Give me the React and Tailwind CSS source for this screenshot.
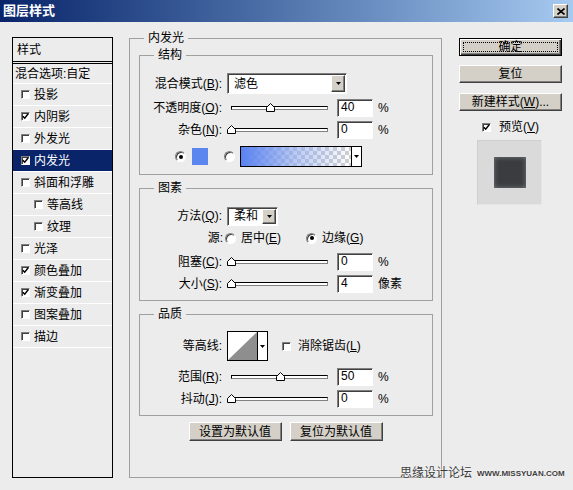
import React from 'react';

const FONT = "font-['Liberation_Sans','Noto_Sans_CJK_SC',sans-serif]";

// classic 3D borders
const raised =
  'border border-t-white border-l-white border-r-[#404040] border-b-[#404040] shadow-[inset_-1px_-1px_0_#808080]';
const sunken =
  'border border-t-[#808080] border-l-[#808080] border-r-white border-b-white shadow-[inset_1px_1px_0_#404040]';

const Caret = () => (
  <svg width="5" height="3" viewBox="0 0 5 3">
    <path d="M0 0h5L2.5 3z" fill="#000" />
  </svg>
);

const Key = ({ k }) => (
  <>
    (<span className="underline underline-offset-1">{k}</span>)
  </>
);

const CheckBox = ({ checked }) => (
  <span className={`flex h-[9px] w-[9px] shrink-0 items-center justify-center bg-white ${sunken}`}>
    {checked && (
      <svg width="7" height="7" viewBox="0 0 7 7">
        <path d="M0.8 3.2l1.9 2 3.5-4.4" stroke="#000" strokeWidth="1.5" fill="none" />
      </svg>
    )}
  </span>
);

const Radio = ({ on }) => (
  <span className="flex h-[11px] w-[11px] shrink-0 items-center justify-center rounded-full border border-t-[#808080] border-l-[#808080] border-r-white border-b-white bg-white shadow-[inset_1px_1px_0_#404040]">
    {on && <span className="h-[4px] w-[4px] rounded-full bg-black" />}
  </span>
);

const Field = ({ value }) => (
  <div className={`ml-[5px] h-[18px] w-[36px] bg-white pl-[3px] text-[12px] leading-[15px] ${sunken}`}>
    {value}
  </div>
);

const Slider = ({ pos }) => (
  <div className="relative ml-[5px] flex h-[12px] w-[105px] items-center">
    <div className="ml-[4px] h-[4px] w-[97px] border border-black border-r-[#808080] border-b-[#808080] bg-white" />
    {/* thumb */}
    <svg className="absolute top-[1px]" style={{ left: pos * 0.97 }} width="9" height="9" viewBox="0 0 9 9">
      <path d="M0.5 8.5V4.5L4.5 0.5L8.5 4.5V8.5Z" fill="#fff" stroke="#000" />
    </svg>
  </div>
);

const SliderRow = ({ label, value, pos, unit = '%', className = '' }) => (
  <div className={`flex h-[22px] items-center ${className}`}>
    <span className="w-[82px] whitespace-nowrap text-right">{label}</span>
    <Slider pos={pos} />
    <Field value={value} />
    <span className="ml-[5px]">{unit}</span>
  </div>
);

const Select = ({ value, width, height }) => (
  <div className={`ml-[5px] flex items-center justify-between bg-white pr-[1px] ${sunken} ${width} ${height}`}>
    <span className="pl-[6px]">{value}</span>
    <span className={`flex h-[calc(100%-2px)] w-[14px] items-center justify-center bg-[#d4d0c8] ${raised}`}>
      <Caret />
    </span>
  </div>
);

const Group = ({ title, className = '', children }) => (
  <fieldset className={`border border-[#a0a0a0] ${className}`}>
    <legend className="ml-[14px] px-[4px] text-[12px] leading-[14px]">{title}</legend>
    {children}
  </fieldset>
);

const Button = ({ children, className = '' }) => (
  <button className={`flex items-center justify-center bg-[#d4d0c8] text-[12px] text-black ${raised} ${className}`}>
    {children}
  </button>
);

const styles = [
  { label: '投影', checked: false },
  { label: '内阴影', checked: true },
  { label: '外发光', checked: false },
  { label: '内发光', checked: true, active: true },
  { label: '斜面和浮雕', checked: false },
  { label: '等高线', checked: false, sub: true },
  { label: '纹理', checked: false, sub: true },
  { label: '光泽', checked: false },
  { label: '颜色叠加', checked: true },
  { label: '渐变叠加', checked: true },
  { label: '图案叠加', checked: false },
  { label: '描边', checked: false },
];

export default function App() {
  return (
    <div className={`relative h-[490px] w-[573px] overflow-hidden bg-[#ececec] text-[12px] text-black ${FONT}`}>
      {/* title bar */}
      <div className="flex h-[22px] items-center justify-between bg-linear-to-r from-[#0a246a] to-[#a6caf0]">
        <span className="pl-[3px] text-[13px] font-bold text-white">图层样式</span>
        <span className={`mr-[5px] flex h-[14px] w-[15px] items-center justify-center bg-[#d4d0c8] ${raised}`}>
          <svg width="8" height="7" viewBox="0 0 8 7">
            <path d="M0.5 0.5l7 6M7.5 0.5l-7 6" stroke="#000" strokeWidth="1.6" />
          </svg>
        </span>
      </div>

      <div className="flex items-start">
        {/* style list */}
        <div className="ml-[12px] mt-[15px] flex h-[441px] w-[101px] flex-col border border-black">
          <div className="flex h-[26px] shrink-0 items-center border-b-[3px] border-double border-black pl-[4px]">样式</div>
          <div className="flex h-[19px] shrink-0 items-center pl-[2px]">混合选项:自定</div>
          {styles.map((s) => (
            <div
              key={s.label}
              className={`flex h-[22px] shrink-0 items-center gap-[4px] border-t border-white ${s.sub ? 'pl-[21px]' : 'pl-[8px]'} ${s.active ? 'bg-[#0a246a] text-white' : ''}`}
            >
              <CheckBox checked={s.checked} />
              <span>{s.label}</span>
            </div>
          ))}
          <div className="border-t border-white" />
        </div>

        {/* settings */}
        <Group title="内发光" className="ml-[16px] mt-[9px] w-[313px] pb-[36px]">
          <Group title="结构" className="ml-[9px] mt-[3px] w-[294px] pb-[7px]">
            <div className="mt-[11px] flex h-[21px] items-center">
              <span className="w-[82px] whitespace-nowrap text-right">
                混合模式<Key k="B" />:
              </span>
              <Select value="滤色" width="w-[120px]" height="h-[21px]" />
            </div>
            <SliderRow className="mt-[3px]" label={<>不透明度<Key k="O" />:</>} value="40" pos={40} />
            <SliderRow label={<>杂色<Key k="N" />:</>} value="0" pos={0} />
            <div className="mt-[5px] flex h-[21px] items-center pl-[35px]">
              <Radio on />
              <span className="ml-[6px] h-[17px] w-[16px] bg-[#5b86f0]" />
              <span className="ml-[16px]">
                <Radio />
              </span>
              <div className="ml-[5px] flex h-[21px] w-[122px] border border-black bg-white">
                <div className="h-full flex-1 bg-[image:repeating-conic-gradient(#cfcfcf_0_25%,#ffffff_0_50%)] bg-[length:8px_8px]">
                  <div className="h-full w-full bg-linear-to-r from-[#5a82f0] via-[#8ca8f0]/60 to-transparent" />
                </div>
                <span className="flex w-[10px] items-center justify-center border-l border-black bg-white">
                  <Caret />
                </span>
              </div>
            </div>
          </Group>

          <Group title="图素" className="ml-[9px] mt-[6px] w-[294px] pb-[5px]">
            <div className="mt-[11px] flex h-[20px] items-center">
              <span className="w-[82px] whitespace-nowrap text-right">
                方法<Key k="Q" />:
              </span>
              <Select value="柔和" width="w-[51px]" height="h-[19px]" />
            </div>
            <div className="mt-[1px] flex h-[22px] items-center">
              <span className="w-[83px] text-right">源:</span>
              <span className="ml-[2px]">
                <Radio />
              </span>
              <span className="ml-[5px]">
                居中<Key k="E" />
              </span>
              <span className="ml-[25px]">
                <Radio on />
              </span>
              <span className="ml-[5px]">
                边缘<Key k="G" />
              </span>
            </div>
            <SliderRow className="mt-[2px]" label={<>阻塞<Key k="C" />:</>} value="0" pos={0} />
            <SliderRow label={<>大小<Key k="S" />:</>} value="4" pos={0} unit="像素" />
          </Group>

          <Group title="品质" className="ml-[9px] mt-[6px] w-[294px] pb-[5px]">
            <div className="mt-[10px] flex h-[30px] items-center">
              <span className="w-[82px] whitespace-nowrap text-right">等高线:</span>
              <div className="ml-[5px] flex h-[30px] w-[41px] border border-black bg-white">
                <svg className="h-full w-[29px]" viewBox="0 0 29 28" preserveAspectRatio="none">
                  <path d="M0 28L29 0V28Z" fill="#8e8e8e" />
                </svg>
                <span className="flex flex-1 items-center justify-center border-l border-black">
                  <Caret />
                </span>
              </div>
              <span className="ml-[14px]">
                <CheckBox />
              </span>
              <span className="ml-[7px]">
                消除锯齿<Key k="L" />
              </span>
            </div>
            <SliderRow className="mt-[5px]" label={<>范围<Key k="R" />:</>} value="50" pos={50} />
            <SliderRow label={<>抖动<Key k="J" />:</>} value="0" pos={0} />
          </Group>

          <div className="mt-[6px] flex justify-center gap-[8px]">
            <Button className="h-[19px] w-[93px]">设置为默认值</Button>
            <Button className="h-[19px] w-[93px]">复位为默认值</Button>
          </div>
        </Group>

        {/* actions */}
        <div className="ml-[17px] mt-[16px] flex w-[103px] flex-col">
          <button className="flex h-[18px] items-stretch border border-black bg-[#d4d0c8] p-0 shadow-[inset_1px_1px_0_#fff,inset_-1px_-1px_0_#404040,inset_-2px_-2px_0_#808080]">
            <span className="m-[3px] flex flex-1 items-center justify-center border border-dotted border-black text-[12px] leading-none">
              确定
            </span>
          </button>
          <Button className="mt-[9px] h-[18px]">复位</Button>
          <Button className="mt-[10px] h-[18px]">
            新建样式<Key k="W" />...
          </Button>
          <div className="mt-[9px] flex h-[14px] items-center justify-center gap-[8px]">
            <CheckBox checked />
            <span>
              预览<Key k="V" />
            </span>
          </div>
          <div className="ml-[18px] mt-[6px] flex h-[65px] w-[65px] items-center justify-center border border-[#e6e6e6] border-t-[#cfcfcf] border-l-[#cfcfcf] bg-[#dadada]">
            <div className="h-[31px] w-[32px] bg-[#3a3c40] shadow-[inset_0_0_5px_#7a7c80]" />
          </div>
        </div>
      </div>

      {/* watermark */}
      <div className="absolute left-[400px] top-[466px] flex items-center gap-[5px] whitespace-nowrap text-[#3c3c3c] [text-shadow:0_0_2px_#fff]">
        <span className="text-[12px] leading-[15px]">思缘设计论坛</span>
        <span className="text-[8px] font-bold leading-[11px]">WWW.MISSYUAN.COM</span>
      </div>
    </div>
  );
}
